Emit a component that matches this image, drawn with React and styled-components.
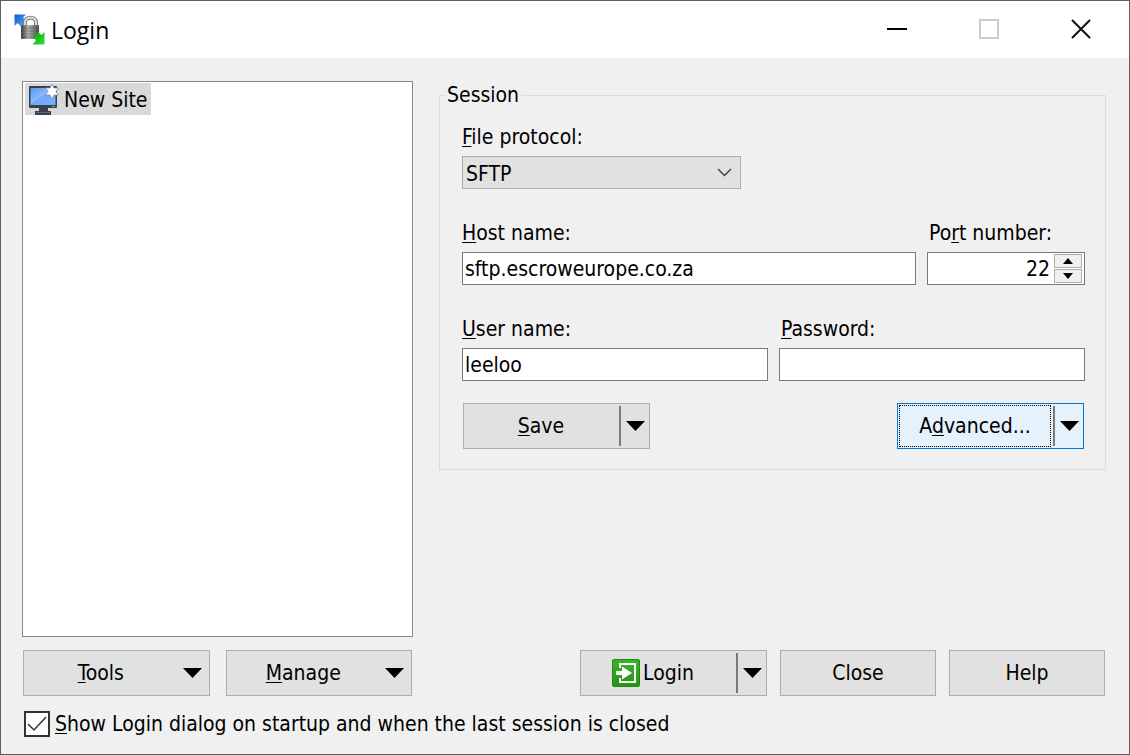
import React from "react";
import styled, { createGlobalStyle } from "styled-components";

const GlobalStyle = createGlobalStyle`
    *{
        box-sizing: border-box;
    }
    body{
        margin: 0;
        background: #f0f0f0;
        color: #000;
    }
    body, button, input, select{
        font-family: "DejaVu Sans Condensed", "DejaVu Sans", "Noto Sans", sans-serif;
        font-stretch: condensed;
        font-size: 21px;
        line-height: 28px;
    }
`
const Window = styled.div`
    min-height: 100vh;
    display: flex;
    flex-direction: column;
    border: 1px solid #5f5f64;
`
const TitleBar = styled.header`
    height: 57px;
    display: flex;
    align-items: center;
    gap: 5px;
    padding-left: 13px;
    background: #fff;
`
const Title = styled.h1`
    flex: 1;
    margin: 0;
    font-family: "Open Sans", "Noto Sans", sans-serif;
    font-stretch: normal;
    font-weight: 400;
    font-size: 23px;
    line-height: 32px;
`
const WindowControls = styled.div`
    display: flex;
    height: 100%;
    padding: 0 2px 1px 0;
`
const WindowButton = styled.button`
    width: 92px;
    display: flex;
    align-items: center;
    justify-content: center;
    border: none;
    padding: 0;
    background: transparent;
`
const Body = styled.main`
    flex: 1;
    display: flex;
    flex-direction: column;
    gap: 14px;
    padding: 23px 23px 16px 21px;
`
const Columns = styled.div`
    flex: 1;
    display: grid;
    grid-template-columns: minmax(0, 391fr) minmax(0, 667fr);
    gap: 26px;
`
const Column = styled.div`
    display: flex;
    flex-direction: column;
    justify-content: space-between;
    gap: 13px;
`
const SiteList = styled.ul`
    flex: 1;
    margin: 0;
    padding: 1px 2px;
    list-style: none;
    border: 1px solid #828790;
    background: #fff;
`
const Site = styled.li`
    width: max-content;
    height: 32px;
    display: flex;
    align-items: center;
    gap: 5px;
    padding: 1px 3px 0;
    background: #d9d9d9;
`
const Session = styled.fieldset`
    min-width: 0;
    margin: 0;
    padding: 0;
    border: 1px solid #dcdcdc;
    legend{
        margin-left: 5px;
        padding: 0 2px;
    }
`
const SessionBody = styled.div`
    padding: 14px 20px 20px 22px;
`
const FieldRow = styled.div`
    display: grid;
    grid-template-columns: ${props => props.$columns};
    gap: 11px;
    margin-bottom: ${props => props.$last ? "22px" : "30px"};
`
const Field = styled.div`
    display: flex;
    flex-direction: column;
    gap: 5px;
    & + & label{
        padding-left: 2px;
    }
`
const Key = styled.span`
    text-decoration: underline;
    text-decoration-thickness: 1px;
    text-underline-offset: 2px;
`
const TextInput = styled.input`
    width: 100%;
    height: 33px;
    padding: 0 2px;
    border: 1px solid #7a7a7a;
    border-radius: 0;
    background: #fff;
    outline: none;
`
const SelectBox = styled.div`
    display: grid;
    align-items: center;
    &>*{
        grid-area: 1 / 1;
    }
    svg{
        justify-self: end;
        margin-right: 9px;
        pointer-events: none;
    }
`
const Select = styled.select`
    appearance: none;
    height: 33px;
    padding: 2px 3px 0;
    border: 1px solid #adadad;
    border-radius: 0;
    background: #e1e1e1;
    color: #000;
`
const Spinner = styled.div`
    height: 33px;
    display: flex;
    padding: 1px 2px;
    border: 1px solid #7a7a7a;
    background: #fff;
    input{
        flex: 1;
        min-width: 0;
        padding: 0 4px;
        border: none;
        text-align: right;
        outline: none;
    }
`
const SpinButtons = styled.div`
    display: grid;
    grid-template-rows: 1fr 1fr;
    gap: 1px;
    width: 28px;
`
const SpinButton = styled.button`
    display: flex;
    align-items: center;
    justify-content: center;
    padding: 0;
    border: 1px solid #adadad;
    background: #f0f0f0;
`
const ButtonRow = styled.div`
    display: flex;
    justify-content: ${props => props.$justify || "flex-start"};
    gap: ${props => props.$gap || "13px"};
    padding: 0 1px;
`
const Button = styled.button`
    width: 156px;
    height: 46px;
    padding: 0;
    border: 1px solid #adadad;
    background: #e1e1e1;
    color: #000;
`
const MenuButton = styled(Button)`
    width: 187px;
    display: flex;
    align-items: center;
    padding-right: 7px;
    span{
        flex: 1;
    }
    svg{
        margin-left: 5px;
    }
`
const Split = styled.div`
    width: 187px;
    height: 46px;
    display: flex;
    align-items: center;
    border: 1px solid ${props => props.$active ? "#0078d7" : "#adadad"};
    background: ${props => props.$active ? "#e5f1fb" : "#e1e1e1"};
    button{
        border: none;
        background: transparent;
        color: #000;
        display: flex;
        align-items: center;
        justify-content: center;
    }
`
const SplitMain = styled.button`
    flex: 1;
    height: 42px;
    margin: 0 2px 0 1px;
    padding: ${props => props.$icon ? "0 10px 0 0" : "0"};
    gap: 3px;
    outline: ${props => props.$focused ? "1px dotted #000" : "none"};
    outline-offset: -1px;
`
const SplitDrop = styled.button`
    width: 30px;
    height: 40px;
    padding: 0;
    && {
        border-left: 2px solid #7a7a7a;
    }
`
const CheckLabel = styled.label`
    display: flex;
    align-items: center;
    gap: 5px;
    padding-left: 2px;
`
const CheckBox = styled.span`
    display: grid;
    &>*{
        grid-area: 1 / 1;
    }
    input{
        appearance: none;
        width: 26px;
        height: 26px;
        margin: 0;
        border: 2px solid #333;
        background: #fff;
    }
    svg{
        pointer-events: none;
        visibility: hidden;
    }
    input:checked + svg{
        visibility: visible;
    }
`

function Arrow(){
    return <svg width="19" height="10" viewBox="0 0 19 10"><path d="M0 0h19L9.500 10z" fill="#000"/></svg>
}

function AppIcon(){
    return(
        <svg width="32" height="32" viewBox="0 0 32 32" aria-hidden="true">
            <defs>
                <linearGradient id="lockBody" x1="0" x2="1">
                    <stop offset="0" stopColor="#3c3c3c"/>
                    <stop offset=".4" stopColor="#b4b4b4"/>
                    <stop offset="1" stopColor="#4c4c4c"/>
                </linearGradient>
                <linearGradient id="blueArrow" x1="0" y1="0" x2="1" y2="1">
                    <stop offset="0" stopColor="#0b57d4"/>
                    <stop offset="1" stopColor="#62b4ff"/>
                </linearGradient>
                <linearGradient id="greenArrow" x1="0" y1="0" x2="1" y2="1">
                    <stop offset="0" stopColor="#0a9a12"/>
                    <stop offset="1" stopColor="#35e03a"/>
                </linearGradient>
            </defs>
            <path d="M.5.5h11.500L9 3.500l4 4-5.500 5.500-4-4L.5 12z" fill="url(#blueArrow)"/>
            <path d="M11 13V8.500c0-6.500 11-6.500 11 0V13" fill="none" stroke="#7d7d7d" strokeWidth="4"/>
            <path d="M11 13V8.500c0-6.500 11-6.500 11 0V13" fill="none" stroke="#dedede" strokeWidth="2"/>
            <rect x="7" y="11" width="18" height="14" rx="1" fill="url(#lockBody)"/>
            <path d="M7 14h18M7 17h18M7 20h18M7 23h18" stroke="#333" strokeOpacity=".3"/>
            <path d="M19 22.500l5-4.500 3.500 3 3-3v12.500H18.500l3.500-4z" fill="url(#greenArrow)"/>
        </svg>
    )
}

function SiteIcon(){
    return(
        <svg width="31" height="32" viewBox="0 0 31 32" aria-hidden="true">
            <defs>
                <linearGradient id="screen" x1="0" y1="0" x2="1" y2="1">
                    <stop offset="0" stopColor="#5596f0"/>
                    <stop offset=".45" stopColor="#8cbafc"/>
                    <stop offset=".5" stopColor="#6fa9fa"/>
                    <stop offset="1" stopColor="#78b0ff"/>
                </linearGradient>
            </defs>
            <rect x="1" y="2" width="28" height="22" rx="1" fill="#36404e"/>
            <rect x="2.500" y="4" width="25" height="17" fill="url(#screen)"/>
            <path d="M24 22.500h3" stroke="#52d234"/>
            <path d="M11 24h9v3h3v4H7v-4h4z" fill="#36404e"/>
            <path d="M8 28.500h14" stroke="#5d6a7c"/>
            <path d="M24 0l2 4h4.500L28 7.500l2.500 3.500H26l-2 4-2-4h-4.500L20 7.500 17.500 4H22z" fill="#fff" stroke="#7b93b5" strokeWidth=".8"/>
        </svg>
    )
}

function LoginIcon(){
    return(
        <svg width="28" height="28" viewBox="0 0 28 28" aria-hidden="true">
            <defs>
                <linearGradient id="loginFill" x1="0" y1="0" x2="0" y2="1">
                    <stop offset="0" stopColor="#3bb32a"/>
                    <stop offset="1" stopColor="#249418"/>
                </linearGradient>
            </defs>
            <rect x=".5" y=".5" width="27" height="27" rx="1.500" fill="url(#loginFill)" stroke="#1f8a14"/>
            <path d="M8 9V5h15v18H8v-4" fill="none" stroke="#fff" strokeWidth="2"/>
            <path d="M4 12h6V7.500l10 6.500-10 6.500V16H4z" fill="#fff"/>
        </svg>
    )
}

export default function App(){
    const [port, setPort] = React.useState(22)

    return(
        <Window>
            <GlobalStyle/>
            <TitleBar>
                <AppIcon/>
                <Title>Login</Title>
                <WindowControls>
                    <WindowButton aria-label="Minimize">
                        <svg width="20" height="20"><path d="M0 10h20" stroke="#000" strokeWidth="2"/></svg>
                    </WindowButton>
                    <WindowButton aria-label="Maximize" disabled>
                        <svg width="20" height="20"><path d="M1 1h18v18H1z" fill="none" stroke="#ccc" strokeWidth="2"/></svg>
                    </WindowButton>
                    <WindowButton aria-label="Close window">
                        <svg width="20" height="20"><path d="M1 1l18 18M19 1L1 19" stroke="#111" strokeWidth="2"/></svg>
                    </WindowButton>
                </WindowControls>
            </TitleBar>
            <Body>
                <Columns>
                    <Column>
                        <SiteList>
                            <Site><SiteIcon/>New Site</Site>
                        </SiteList>
                        <ButtonRow $gap="16px">
                            <MenuButton><span><Key as="u">T</Key>ools</span><Arrow/></MenuButton>
                            <MenuButton><span><Key as="u">M</Key>anage</span><Arrow/></MenuButton>
                        </ButtonRow>
                    </Column>
                    <Column>
                        <Session>
                            <legend>Session</legend>
                            <SessionBody>
                                <FieldRow $columns="279px">
                                    <Field>
                                        <label htmlFor="protocol"><Key>F</Key>ile protocol:</label>
                                        <SelectBox>
                                            <Select id="protocol" defaultValue="SFTP">
                                                <option>SFTP</option>
                                                <option>SCP</option>
                                                <option>FTP</option>
                                            </Select>
                                            <svg width="15" height="9" viewBox="0 0 15 9"><path d="M1 1l6.500 6.500L14 1" fill="none" stroke="#444" strokeWidth="1.500"/></svg>
                                        </SelectBox>
                                    </Field>
                                </FieldRow>
                                <FieldRow $columns="1fr 158px">
                                    <Field>
                                        <label htmlFor="host"><Key>H</Key>ost name:</label>
                                        <TextInput id="host" defaultValue="sftp.escroweurope.co.za"/>
                                    </Field>
                                    <Field>
                                        <label htmlFor="port">Po<Key>r</Key>t number:</label>
                                        <Spinner>
                                            <input id="port" inputMode="numeric" value={port} onChange={event=>setPort(Number(event.target.value) || 0)}/>
                                            <SpinButtons>
                                                <SpinButton aria-label="Increase port" onClick={()=>setPort(port + 1)}>
                                                    <svg width="10" height="6"><path d="M0 6h10L5 0z"/></svg>
                                                </SpinButton>
                                                <SpinButton aria-label="Decrease port" onClick={()=>setPort(port - 1)}>
                                                    <svg width="10" height="6"><path d="M0 0h10L5 6z"/></svg>
                                                </SpinButton>
                                            </SpinButtons>
                                        </Spinner>
                                    </Field>
                                </FieldRow>
                                <FieldRow $columns="1fr 1fr" $last>
                                    <Field>
                                        <label htmlFor="user"><Key>U</Key>ser name:</label>
                                        <TextInput id="user" defaultValue="leeloo"/>
                                    </Field>
                                    <Field>
                                        <label htmlFor="password"><Key>P</Key>assword:</label>
                                        <TextInput id="password" type="password"/>
                                    </Field>
                                </FieldRow>
                                <ButtonRow $justify="space-between">
                                    <Split>
                                        <SplitMain><span><Key>S</Key>ave</span></SplitMain>
                                        <SplitDrop aria-label="Save options"><Arrow/></SplitDrop>
                                    </Split>
                                    <Split $active>
                                        <SplitMain $focused><span>A<Key>d</Key>vanced...</span></SplitMain>
                                        <SplitDrop aria-label="Advanced options"><Arrow/></SplitDrop>
                                    </Split>
                                </ButtonRow>
                            </SessionBody>
                        </Session>
                        <ButtonRow $justify="flex-end">
                            <Split>
                                <SplitMain $icon><LoginIcon/>Login</SplitMain>
                                <SplitDrop aria-label="Login options"><Arrow/></SplitDrop>
                            </Split>
                            <Button>Close</Button>
                            <Button>Help</Button>
                        </ButtonRow>
                    </Column>
                </Columns>
                <CheckLabel>
                    <CheckBox>
                        <input type="checkbox" defaultChecked/>
                        <svg width="26" height="26"><path d="M4 13l6 6L22 6" fill="none" stroke="#333" strokeWidth="1.500"/></svg>
                    </CheckBox>
                    <span><Key>S</Key>how Login dialog on startup and when the last session is closed</span>
                </CheckLabel>
            </Body>
        </Window>
    )
}
